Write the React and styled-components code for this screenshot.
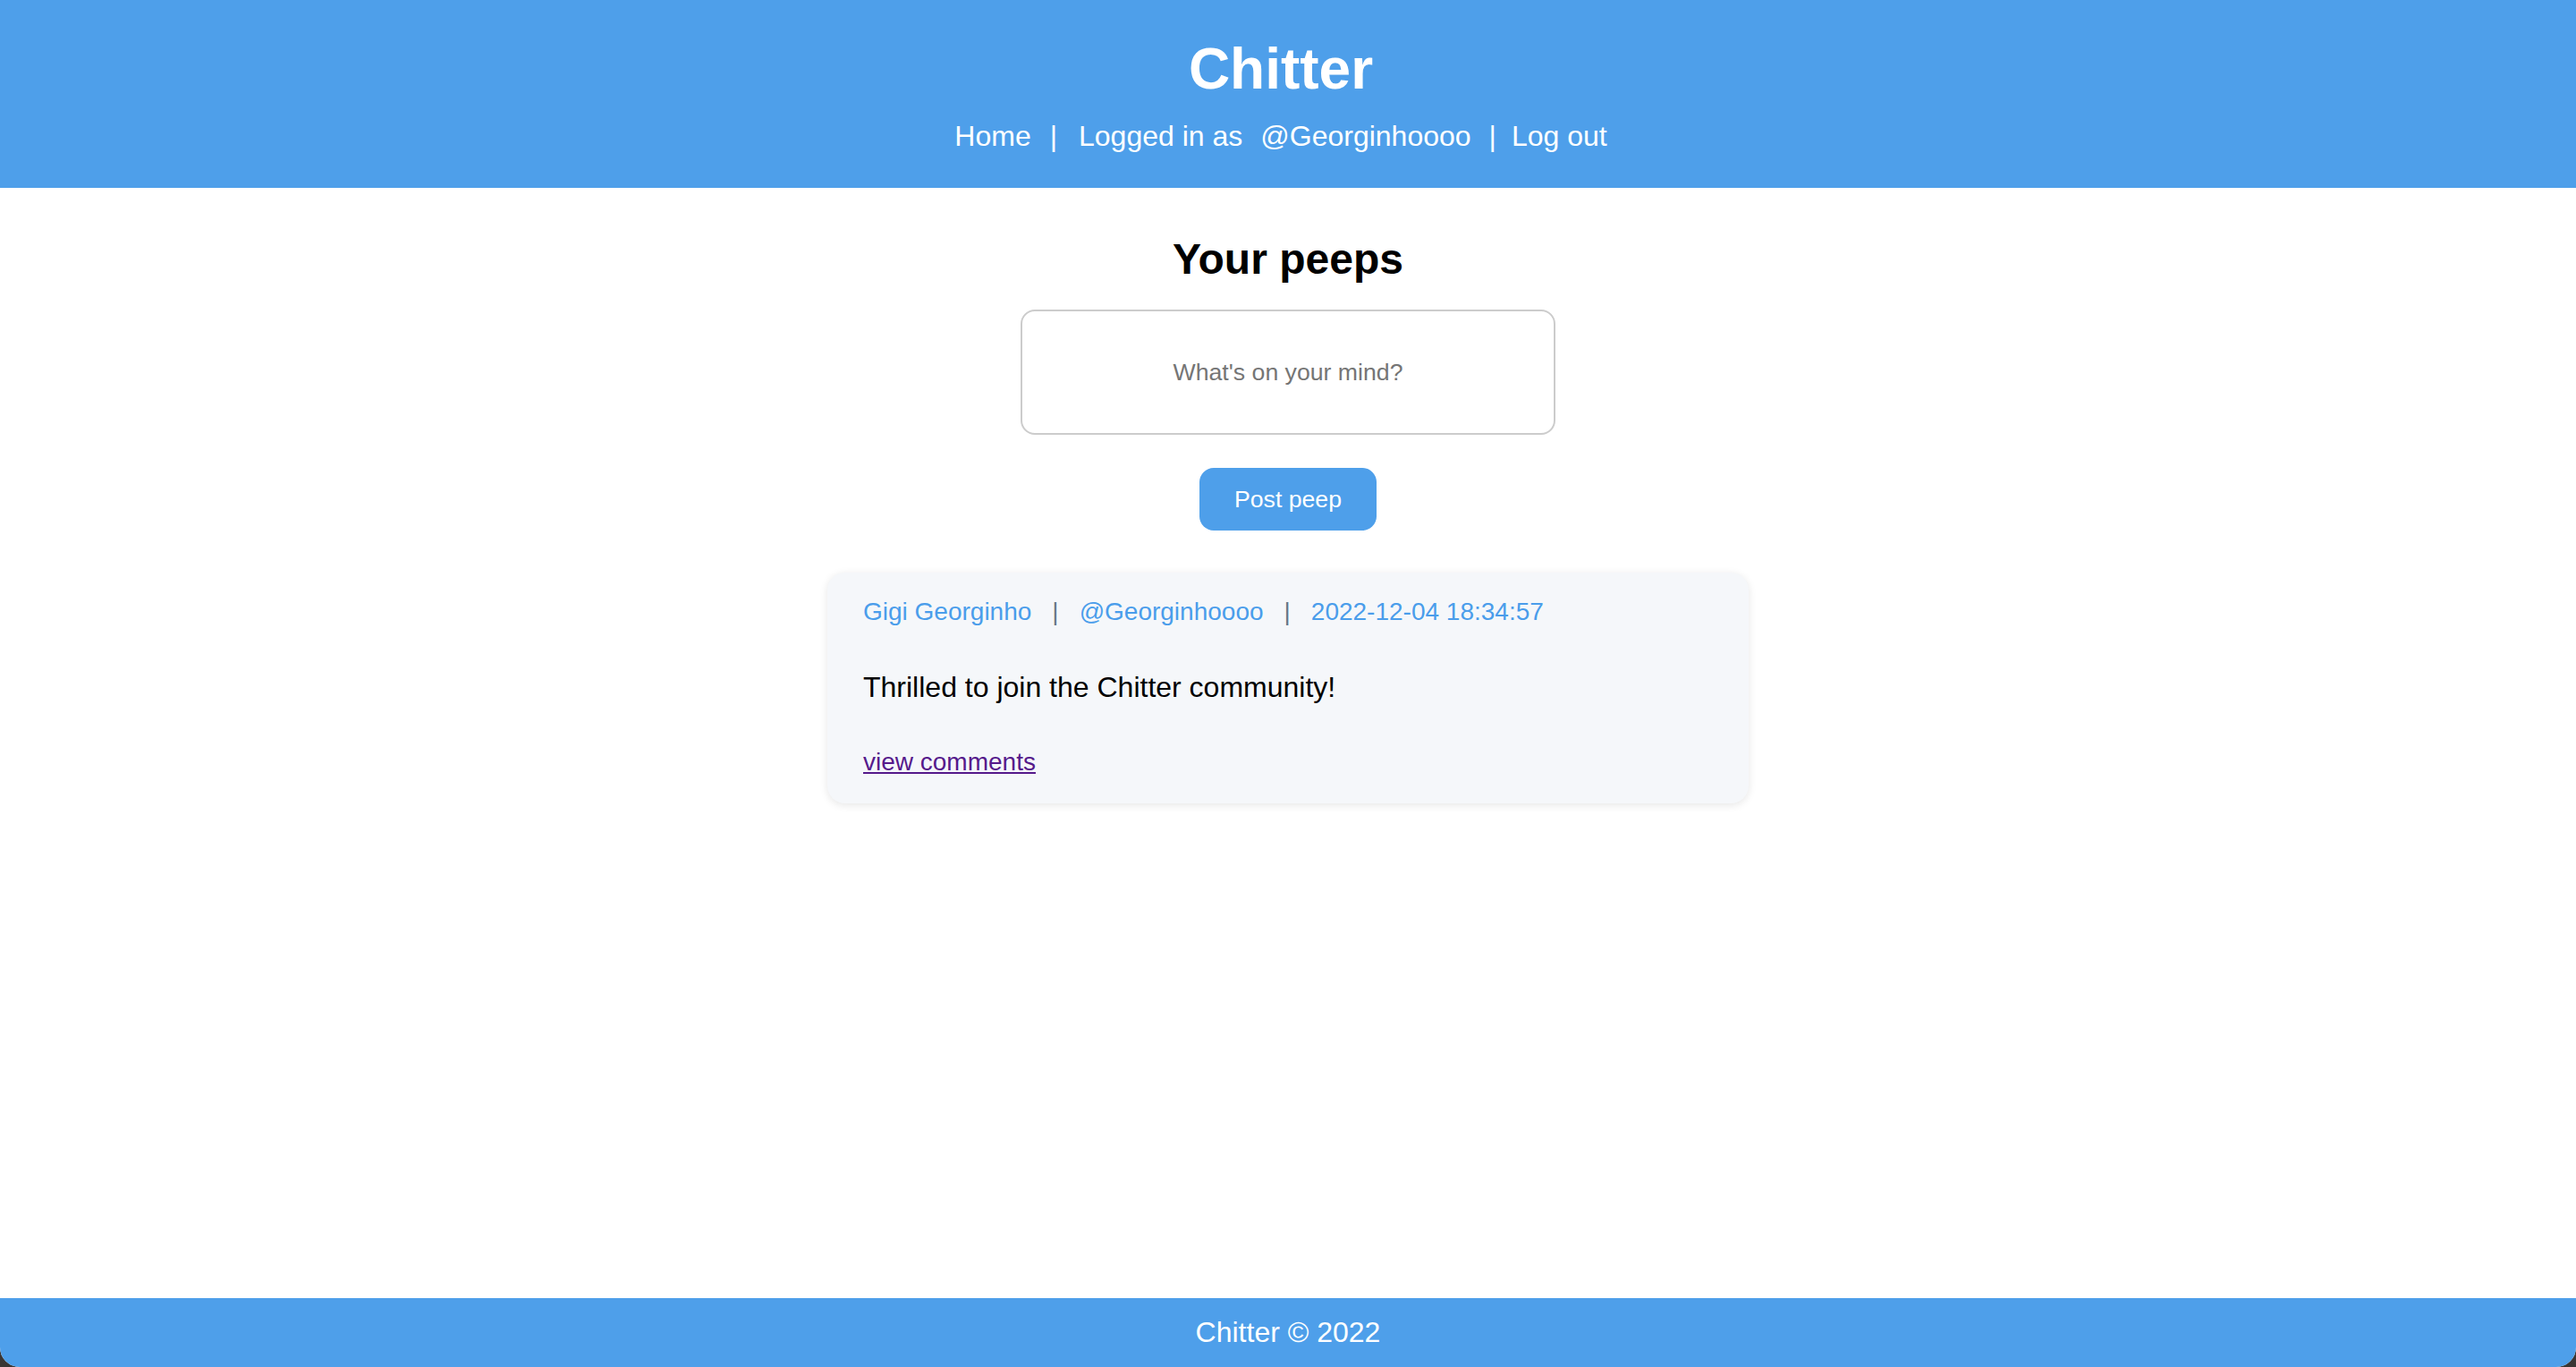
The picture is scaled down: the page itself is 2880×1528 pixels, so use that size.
import styled, { createGlobalStyle } from "styled-components";

const GlobalStyle = createGlobalStyle`
    html, body {
        margin: 0;
        padding: 0;
        background-color: #3a3634;
    }

    body {
        font-family: "Liberation Sans", Arial, sans-serif;
    }

    * {
        box-sizing: border-box;
    }
`;

const peeps = [
    {
        id: 1,
        name: "Gigi Georginho",
        handle: "@Georginhoooo",
        time: "2022-12-04 18:34:57",
        body: "Thrilled to join the Chitter community!",
    },
];

const App = () => {
    return (
        <>
            <GlobalStyle />
            <Page>
                <Header>
                    <Title>Chitter</Title>
                    <NavRow>
                        <NavLink href="#">Home</NavLink>
                        <NavSep>|</NavSep>
                        <NavText>Logged in as</NavText>
                        <NavText>@Georginhoooo</NavText>
                        <NavSep $last>|</NavSep>
                        <NavLink href="#">Log out</NavLink>
                    </NavRow>
                </Header>

                <Main>
                    <Heading>Your peeps</Heading>
                    <PeepForm onSubmit={(e) => e.preventDefault()}>
                        <PeepInput placeholder="What's on your mind?" />
                        <PostButton type="submit">Post peep</PostButton>
                    </PeepForm>

                    {peeps.map((peep) => (
                        <Card key={peep.id}>
                            <Meta>
                                <MetaText>{peep.name}</MetaText>
                                <MetaSep>|</MetaSep>
                                <MetaText>{peep.handle}</MetaText>
                                <MetaSep>|</MetaSep>
                                <MetaText>{peep.time}</MetaText>
                            </Meta>
                            <Body>{peep.body}</Body>
                            <Comments href="#">view comments</Comments>
                        </Card>
                    ))}
                </Main>

                <Footer>Chitter © 2022</Footer>
            </Page>
        </>
    );
};

const Page = styled.div`
    height: 100vh;
    display: flex;
    flex-direction: column;
    background-color: white;
    border-radius: 0 0 22px 22px;
    overflow: hidden;
`;

const Header = styled.header`
    background-color: #4e9fea;
    height: 210px;
    display: flex;
    flex-direction: column;
    align-items: center;
    padding: 40px 16px 0 0;
    color: white;
`;

const Title = styled.h1`
    margin: 0;
    font-size: 64px;
    line-height: 74px;
    font-weight: 700;
`;

const NavRow = styled.nav`
    display: flex;
    align-items: center;
    gap: 20px;
    margin-top: 20px;
    font-size: 32px;
    line-height: 37px;
`;

const NavLink = styled.a`
    color: white;
    text-decoration: none;

    :hover {
        cursor: pointer;
    }
`;

const NavText = styled.span``;

const NavSep = styled.span`
    margin: ${(p) => (p.$last ? "0 -3px 0 0" : "0 4px 0 1px")};
`;

const Main = styled.main`
    flex: 1;
    display: flex;
    flex-direction: column;
    align-items: center;
    padding-top: 52px;
`;

const Heading = styled.h2`
    margin: 0;
    font-size: 48px;
    line-height: 56px;
    font-weight: 700;
    color: black;
`;

const PeepForm = styled.form`
    display: flex;
    flex-direction: column;
    align-items: center;
    margin-top: 28px;
`;

const PeepInput = styled.input`
    width: 598px;
    height: 140px;
    border: 2px solid #cccccc;
    border-radius: 16px;
    background-color: white;
    font-family: "Liberation Sans", Arial, sans-serif;
    font-size: 26.67px;
    text-align: center;
    outline: none;

    ::placeholder {
        color: #757575;
    }
`;

const PostButton = styled.button`
    margin-top: 37px;
    width: 198px;
    height: 70px;
    border: none;
    border-radius: 16px;
    background-color: #4e9fea;
    color: white;
    font-family: "Liberation Sans", Arial, sans-serif;
    font-size: 26.67px;

    :hover {
        cursor: pointer;
    }
`;

const Card = styled.div`
    width: 1030px;
    margin-top: 47px;
    padding: 28px 40px 30px;
    background-color: #f5f7fa;
    border-radius: 20px;
    box-shadow: 0 2px 10px rgba(0, 0, 0, 0.1);
    display: flex;
    flex-direction: column;
    align-items: flex-start;
`;

const Meta = styled.div`
    display: flex;
    align-items: center;
    gap: 23px;
    font-size: 28px;
    line-height: 32px;
`;

const MetaText = styled.span`
    color: #4a9deb;
`;

const MetaSep = styled.span`
    color: #657786;
`;

const Body = styled.p`
    margin: 50px 0 0;
    font-size: 32px;
    line-height: 37px;
    color: black;
`;

const Comments = styled.a`
    margin-top: 49px;
    font-size: 28px;
    line-height: 32px;
    color: #551a8b;
    text-decoration: underline;
`;

const Footer = styled.footer`
    height: 77px;
    background-color: #4e9fea;
    color: white;
    font-size: 32px;
    display: flex;
    align-items: center;
    justify-content: center;
`;

export default App;
